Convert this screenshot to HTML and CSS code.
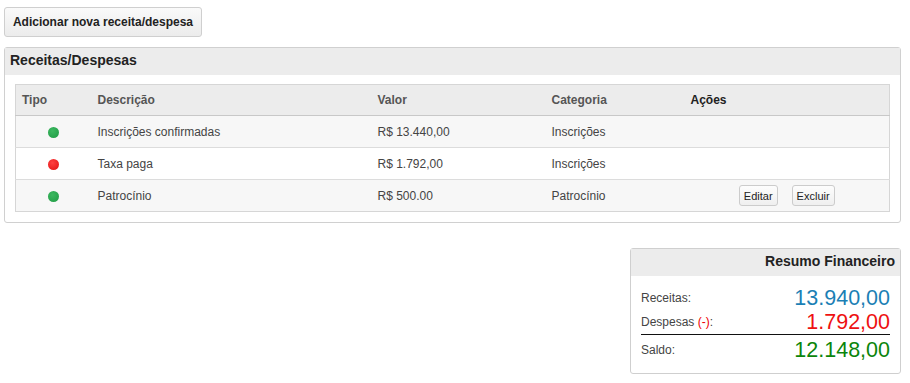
FILE: index.html
```html
<!DOCTYPE html>
<html>
<head>
<meta charset="utf-8">
<link rel="stylesheet" href="styles.css">
</head>
<body>
<div class="page">
  <button class="btn-main">Adicionar nova receita/despesa</button>
  <div class="panel">
    <div class="panel-head">Receitas/Despesas</div>
    <div class="panel-body">
      <table class="grid">
        <thead>
          <tr><th class="c-tipo">Tipo</th><th class="c-desc">Descrição</th><th class="c-valor">Valor</th><th class="c-cat">Categoria</th><th class="c-acoes">Ações</th></tr>
        </thead>
        <tbody>
          <tr class="odd"><td class="dot-cell"><span class="dot green"></span></td><td>Inscrições confirmadas</td><td>R$ 13.440,00</td><td>Inscrições</td><td></td></tr>
          <tr><td class="dot-cell"><span class="dot red"></span></td><td>Taxa paga</td><td>R$ 1.792,00</td><td>Inscrições</td><td></td></tr>
          <tr class="odd"><td class="dot-cell"><span class="dot green"></span></td><td>Patrocínio</td><td>R$ 500.00</td><td>Patrocínio</td><td class="actions"><button class="btn-sm">Editar</button><button class="btn-sm">Excluir</button></td></tr>
        </tbody>
      </table>
    </div>
  </div>
  <div class="summary-wrap">
    <div class="summary">
      <div class="summary-head">Resumo Financeiro</div>
      <div class="summary-body">
        <div class="srow"><span class="slabel">Receitas:</span><span class="sval blue">13.940,00</span></div>
        <div class="srow total-line"><span class="slabel">Despesas <span class="minus">(-)</span>:</span><span class="sval red-t">1.792,00</span></div>
        <div class="srow"><span class="slabel">Saldo:</span><span class="sval green-t">12.148,00</span></div>
      </div>
    </div>
  </div>
</div>
</body>
</html>
```
FILE: styles.css
```css
* { box-sizing: border-box; }
body {
  margin: 0;
  font-family: "Liberation Sans", Arial, sans-serif;
  color: #333;
  background: #fff;
}
.page {
  padding: 7px 9px 0 4px;
}
.btn-main {
  display: block;
  height: 30px;
  width: 198px;
  padding: 0;
  font-family: inherit;
  font-size: 12px;
  font-weight: bold;
  color: #222;
  background: linear-gradient(#fafafa, #ececec);
  border: 1px solid #cfcfcf;
  border-radius: 3px;
}
.panel {
  margin-top: 10px;
  border: 1px solid #d0d0d0;
  border-radius: 3px;
  background: #fff;
}
.panel-head {
  height: 27px;
  background: #ececec;
  font-size: 14px;
  font-weight: bold;
  color: #222;
  line-height: 25px;
  padding-left: 5px;
}
.panel-body {
  padding: 9px 10px 10px 10px;
}
.grid {
  width: 100%;
  border-collapse: collapse;
  border: 1px solid #d6d6d6;
  font-size: 12px;
  table-layout: fixed;
}
.grid th {
  text-align: left;
  background: #ececec;
  color: #555;
  font-weight: bold;
  height: 31px;
  padding: 0 6px;
  border-bottom: 1px solid #c8c8c8;
}
.grid th.c-acoes { color: #222; }
.c-tipo { width: 76px; }
.c-desc { width: 280px; }
.c-valor { width: 174px; }
.c-cat { width: 139px; }
.grid td {
  height: 32px;
  padding: 0 6px;
  color: #444;
  border-top: 1px solid #dcdcdc;
}
.grid tbody tr:first-child td { border-top: none; }
.grid tr.odd td { background: #f7f7f7; }
.dot-cell { text-align: center; }
.dot {
  display: inline-block;
  width: 11px;
  height: 11px;
  border-radius: 50%;
  vertical-align: middle;
}
.dot.green { background: radial-gradient(circle at 40% 35%, #3cb860, #1f9a44); }
.dot.red { background: radial-gradient(circle at 40% 35%, #ff4040, #e01010); }
.actions { text-align: center; }
.btn-sm {
  height: 21px;
  font-family: inherit;
  font-size: 11px;
  color: #222;
  padding: 0 4px;
  margin: 0 7px;
  background: linear-gradient(#fdfdfd, #efefef);
  border: 1px solid #cccccc;
  border-radius: 3px;
}
.summary-wrap {
  display: flex;
  justify-content: flex-end;
  margin-top: 25px;
}
.summary {
  width: 271px;
  border: 1px solid #cfcfcf;
  border-radius: 3px;
}
.summary-head {
  height: 27px;
  background: #ececec;
  text-align: right;
  font-size: 14px;
  font-weight: bold;
  color: #222;
  line-height: 24px;
  padding-right: 5px;
}
.summary-body {
  padding: 9px 10px 11px 10px;
}
.srow {
  display: flex;
  justify-content: space-between;
  align-items: center;
  height: 25px;
}
.srow.total-line {
  border-bottom: 1px solid #111;
  height: 25px;
  margin-bottom: 2px;
}
.slabel {
  font-size: 12px;
  color: #444;
}
.sval {
  font-size: 21.5px;
  line-height: 22px;
}
.minus { color: #e00; }
.blue { color: #1b7fb5; }
.red-t { color: #ee1111; }
.green-t { color: #0b850b; }
```
